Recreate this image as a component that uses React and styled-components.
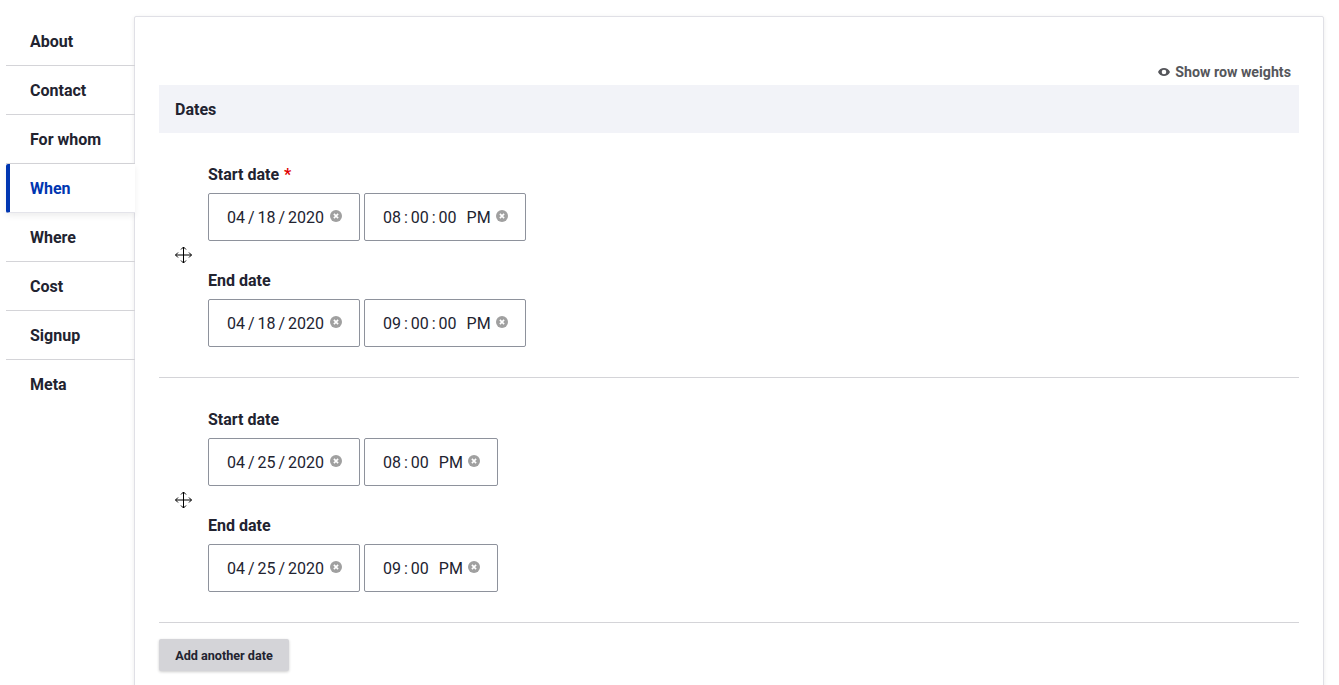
import styled, { createGlobalStyle } from "styled-components"

const GlobalStyle = createGlobalStyle`
    html, body {
        margin: 0;
        height: 685px;
        overflow: hidden;
        background: #fff;
        font-family: Roboto, "Liberation Sans", sans-serif;
        color: #222330;
    }
`

const Page = styled.div`
    display: flex;
    align-items: flex-start;
    padding: 16px 15px 0 6px;
    height: 685px;
    box-sizing: border-box;
    overflow: hidden;
`

const Tabs = styled.nav`
    width: 129px;
    flex-shrink: 0;
    padding-top: 1px;
    position: relative;
    z-index: 1;
`

const Tab = styled.a`
    display: flex;
    align-items: center;
    box-sizing: border-box;
    height: 49px;
    padding-left: 24px;
    font-size: 16px;
    font-weight: 700;
    border-bottom: 1px solid #d4d4d8;
    color: ${(p) => (p.$active ? "#0036b1" : "#222330")};
    ${(p) =>
        p.$active &&
        `
        background: #fff;
        border-bottom-color: #e4e4ea;
        border-left: 4px solid #0036b1;
        border-radius: 2px 0 0 2px;
        padding-left: 20px;
        box-shadow: 0 3px 6px rgba(0, 0, 0, 0.07);
    `}
    &:last-child {
        border-bottom: 0;
    }
`

const Card = styled.main`
    flex: 1;
    margin-left: -1px;
    height: 720px;
    box-sizing: border-box;
    padding: 47px 24px 0;
    background: #fff;
    border: 1px solid #e0e0e6;
    border-radius: 2px;
    box-shadow: 0 1px 4px rgba(0, 0, 0, 0.08);
`

const WeightsBar = styled.div`
    display: flex;
    justify-content: flex-end;
    box-sizing: border-box;
    padding: 0 8px 6px 0;
    height: 21px;
`

const WeightsToggle = styled.a`
    display: flex;
    align-items: center;
    gap: 5px;
    font-size: 14.22px;
    font-weight: 700;
    color: #55565b;
`

const TableHead = styled.div`
    display: flex;
    align-items: center;
    height: 48px;
    padding-left: 16px;
    background: #f2f3f8;
    font-size: 16px;
    font-weight: 700;
`

const Row = styled.div`
    display: flex;
    align-items: center;
    box-sizing: border-box;
    height: 245px;
    padding-left: 16px;
    border-bottom: 1px solid #d4d4d8;
`

const Handle = styled.svg`
    width: 17px;
    height: 18px;
    flex-shrink: 0;
    margin-right: 16px;
`

const Fields = styled.div`
    display: flex;
    flex-direction: column;
    gap: 30px;
    margin-top: 2px;
`

const Field = styled.div`
    display: flex;
    flex-direction: column;
    gap: 8px;
`

const Label = styled.label`
    font-size: 16px;
    line-height: 20px;
    font-weight: 700;
`

const Required = styled.span`
    color: #e00000;
    margin-left: 5px;
`

const Inputs = styled.div`
    display: flex;
    gap: 4px;
`

const Input = styled.div`
    display: flex;
    align-items: center;
    box-sizing: border-box;
    width: ${(p) => p.$width}px;
    height: 48px;
    padding-left: 18px;
    border: 1px solid #8e929c;
    border-radius: 2px;
    font-size: 16px;
    word-spacing: -1px;
    white-space: pre;
    color: #222330;
`

const Period = styled.span`
    margin-left: 10px;
`

const ClearIcon = styled.svg`
    width: 12px;
    height: 12px;
    margin-left: ${(p) => p.$gap}px;
    margin-top: -2px;
    flex-shrink: 0;
`

const AddButton = styled.button`
    display: block;
    margin-top: 16px;
    width: 130px;
    height: 32px;
    padding: 0;
    background: #d4d4d8;
    border: 0;
    border-radius: 2px;
    box-shadow: 0 1px 3px rgba(0, 0, 0, 0.2);
    font-family: inherit;
    font-size: 12.64px;
    font-weight: 700;
    color: #222330;
`

const tabs = ["About", "Contact", "For whom", "When", "Where", "Cost", "Signup", "Meta"]

const rows = [
    [
        { label: "Start date", required: true, date: "04 / 18 / 2020", time: "08 : 00 : 00", wide: true },
        { label: "End date", date: "04 / 18 / 2020", time: "09 : 00 : 00", wide: true },
    ],
    [
        { label: "Start date", date: "04 / 25 / 2020", time: "08 : 00" },
        { label: "End date", date: "04 / 25 / 2020", time: "09 : 00" },
    ],
]

function Clear({ gap }) {
    return (
        <ClearIcon $gap={gap} viewBox="0 0 12 12">
            <circle cx="6" cy="6" r="6" fill="#a0a0a0" />
            <path d="M3.9 3.9l4.2 4.2M8.1 3.9L3.9 8.1" stroke="#fff" strokeWidth="1.6" />
        </ClearIcon>
    )
}

function DragHandle() {
    return (
        <Handle viewBox="0 0 17 18" fill="none" stroke="#000" strokeWidth="1">
            <path d="M8.5 1v16M0.500 9h16" />
            <path d="M6 3.500L8.500 1 11 3.500M6 14.500L8.500 17 11 14.500M3 6.500L0.500 9 3 11.500M14 6.500L16.500 9 14 11.500" />
        </Handle>
    )
}

function DateField({ field }) {
    return (
        <Field>
            <Label>
                {field.label}
                {field.required && <Required>*</Required>}
            </Label>
            <Inputs>
                <Input $width={152}>
                    {field.date}
                    <Clear gap={6} />
                </Input>
                <Input $width={field.wide ? 162 : 134}>
                    {field.time}
                    <Period>PM</Period>
                    <Clear gap={5} />
                </Input>
            </Inputs>
        </Field>
    )
}

function App() {
    return (
        <>
            <GlobalStyle />
            <Page>
                <Tabs>
                    {tabs.map((tab) => (
                        <Tab key={tab} $active={tab === "When"}>
                            {tab}
                        </Tab>
                    ))}
                </Tabs>
                <Card>
                    <WeightsBar>
                        <WeightsToggle>
                            <svg width="12" height="8" viewBox="0 0 12 8">
                                <path
                                    d="M6 0C3.400 0 1.200 1.600 0 4c1.200 2.400 3.400 4 6 4s4.800-1.600 6-4C10.800 1.600 8.600 0 6 0zm0 6.300A2.300 2.300 0 1 1 6 1.700a2.300 2.300 0 0 1 0 4.600z"
                                    fill="#55565b"
                                />
                            </svg>
                            Show row weights
                        </WeightsToggle>
                    </WeightsBar>
                    <TableHead>Dates</TableHead>
                    {rows.map((row, i) => (
                        <Row key={i}>
                            <DragHandle />
                            <Fields>
                                {row.map((field) => (
                                    <DateField key={field.label} field={field} />
                                ))}
                            </Fields>
                        </Row>
                    ))}
                    <AddButton>Add another date</AddButton>
                </Card>
            </Page>
        </>
    )
}

export default App
